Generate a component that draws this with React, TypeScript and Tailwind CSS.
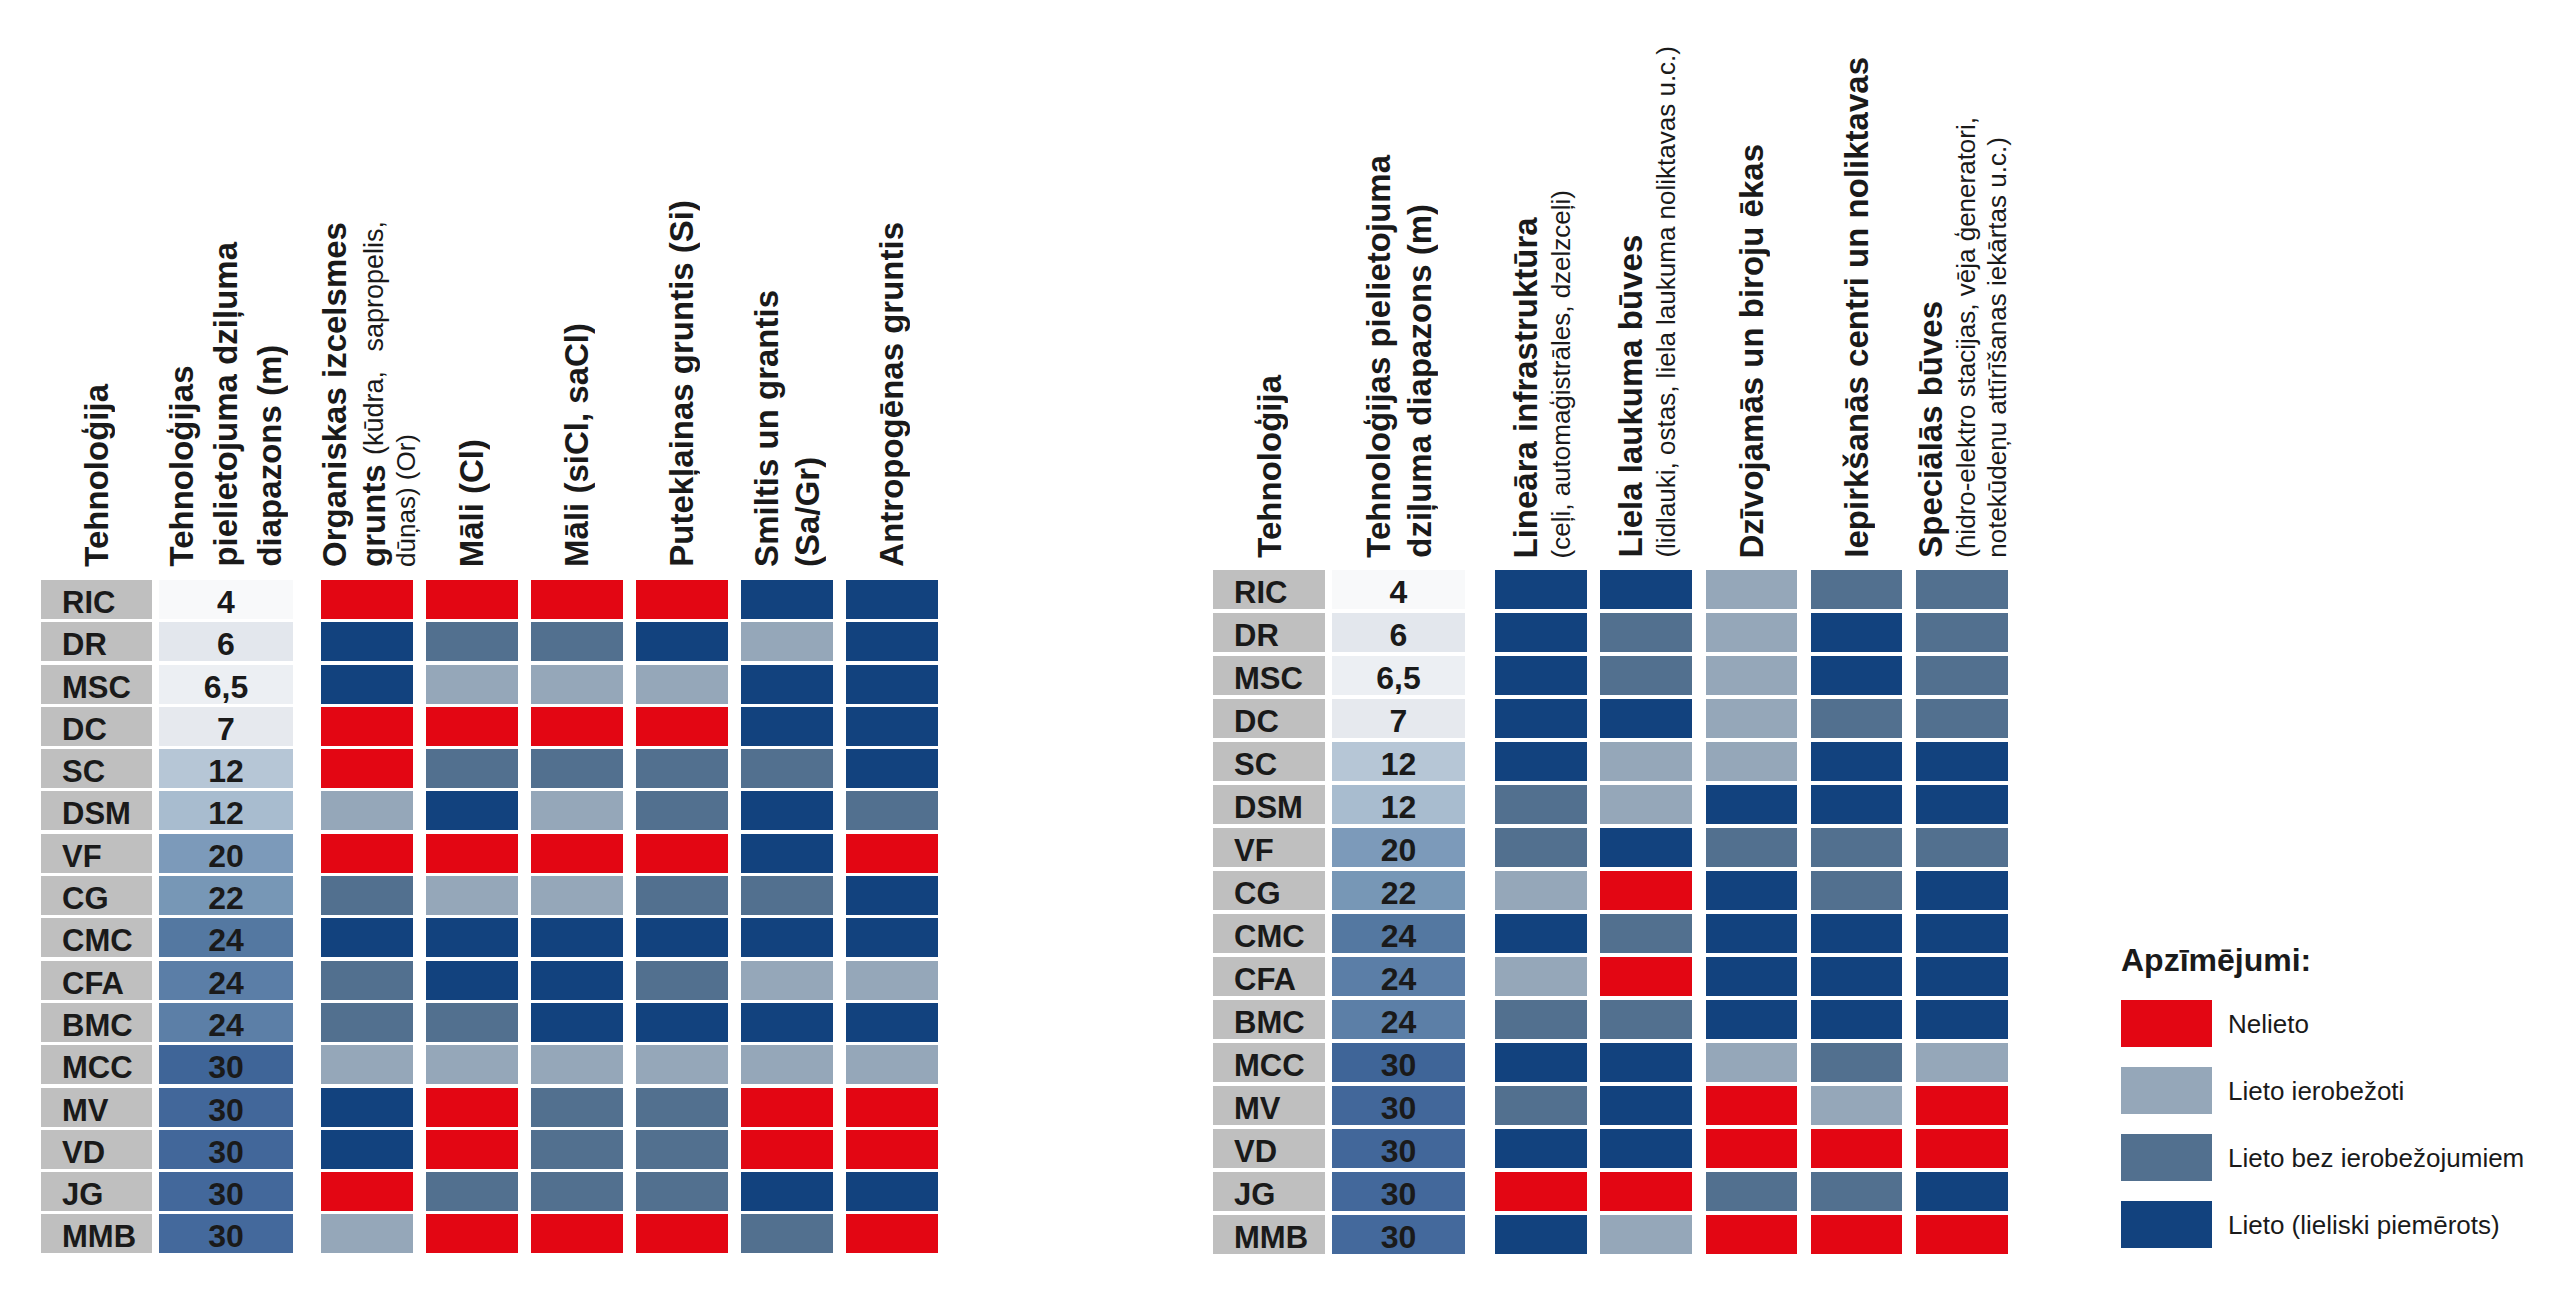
import type { ReactNode } from "react"

const FONT = "font-['Liberation_Sans',Arial,sans-serif]"

const CELL: Record<string, string> = {
  R: "bg-[#e30613]",
  L: "bg-[#95a7b9]",
  M: "bg-[#52708f]",
  D: "bg-[#12427e]",
}

const rows = [
  { t: "RIC", d: "4", bg: "bg-[#f8f9fa]" },
  { t: "DR", d: "6", bg: "bg-[#e3e7ed]" },
  { t: "MSC", d: "6,5", bg: "bg-[#eceff3]" },
  { t: "DC", d: "7", bg: "bg-[#e6e9ee]" },
  { t: "SC", d: "12", bg: "bg-[#b6c6d6]" },
  { t: "DSM", d: "12", bg: "bg-[#a8bccf]" },
  { t: "VF", d: "20", bg: "bg-[#7c9aba]" },
  { t: "CG", d: "22", bg: "bg-[#7797b6]" },
  { t: "CMC", d: "24", bg: "bg-[#5478a1]" },
  { t: "CFA", d: "24", bg: "bg-[#5b7ea7]" },
  { t: "BMC", d: "24", bg: "bg-[#5c7fa7]" },
  { t: "MCC", d: "30", bg: "bg-[#3f6598]" },
  { t: "MV", d: "30", bg: "bg-[#42679a]" },
  { t: "VD", d: "30", bg: "bg-[#42679a]" },
  { t: "JG", d: "30", bg: "bg-[#43689b]" },
  { t: "MMB", d: "30", bg: "bg-[#44699c]" },
]

// soil types (left) and building types (right), one string per technology row
const soil = [
  "RRRRDD", "DMMDLD", "DLLLDD", "RRRRDD", "RMMMMD", "LDLMDM", "RRRRDR", "MLLMMD",
  "DDDDDD", "MDDMLL", "MMDDDD", "LLLLLL", "DRMMRR", "DRMMRR", "RMMMDD", "LRRRMR",
]
const build = [
  "DDLMM", "DMLDM", "DMLDM", "DDLMM", "DLLDD", "MLDDD", "MDMMM", "LRDMD",
  "DMDDD", "LRDDD", "MMDDD", "DDLML", "MDRLR", "DDRRR", "RRMMD", "DLRRR",
]

// rotated header: lines stack left to right, text reads bottom to top
function VHead({ children }: { children: ReactNode }) {
  return (
    <div className="[writing-mode:vertical-rl] rotate-180 whitespace-nowrap text-[#1a1a1a]">
      {children}
    </div>
  )
}

const B = ({ children }: { children: ReactNode }) => (
  <div className="text-[33px] font-bold leading-[41px]">{children}</div>
)
const S = ({ children }: { children: ReactNode }) => (
  <div className="text-[26px] leading-[31px]">{children}</div>
)

type Side = {
  headH: string
  headPb: string
  techW: string
  depthW: string
  dataGap0: string
  dataGap: string
  rowGap: string
  heads: ReactNode[]
  data: string[]
}

function Table({ s }: { s: Side }) {
  const dataMl = (i: number) => (i === 0 ? s.dataGap0 : s.dataGap)
  return (
    <div className="flex flex-col">
      <div className={`flex items-end ${s.headH}`}>
        <div className={`flex justify-center ${s.techW} ${s.headPb}`}>{s.heads[0]}</div>
        <div className={`ml-[7px] flex justify-center ${s.depthW} ${s.headPb}`}>{s.heads[1]}</div>
        {s.heads.slice(2).map((h, i) => (
          <div key={i} className={`flex w-[91.5px] justify-center ${dataMl(i)} ${s.headPb}`}>
            {h}
          </div>
        ))}
      </div>
      <div className={`flex flex-col ${s.rowGap}`}>
        {rows.map((r, ri) => (
          <div key={r.t} className="flex h-[39px]">
            <div className={`${s.techW} h-[39px] bg-[#bfbfbf] pl-[21px] text-[31px] font-bold leading-[45px] text-[#1a1a1a]`}>
              {r.t}
            </div>
            <div className={`ml-[7px] ${s.depthW} h-[39px] ${r.bg} text-center text-[32px] font-bold leading-[44px] text-[#1a1a1a]`}>
              {r.d}
            </div>
            {s.data[ri].split("").map((c, ci) => (
              <div key={ci} className={`h-[39px] w-[91.5px] ${dataMl(ci)} ${CELL[c]}`} />
            ))}
          </div>
        ))}
      </div>
    </div>
  )
}

const left: Side = {
  headH: "h-[580px]",
  headPb: "pb-[13px]",
  techW: "w-[111px]",
  depthW: "w-[134px]",
  dataGap0: "ml-[28px]",
  dataGap: "ml-[13.5px]",
  rowGap: "gap-y-[3.3px]",
  data: soil,
  heads: [
    <VHead><B>Tehnoloģija</B></VHead>,
    <VHead>
      <div className="text-[33px] font-bold leading-[44px]">Tehnoloģijas</div>
      <div className="text-[33px] font-bold leading-[44px]">pielietojuma dziļuma</div>
      <div className="text-[33px] font-bold leading-[44px]">diapazons (m)</div>
    </VHead>,
    <VHead>
      <B>Organiskas izcelsmes</B>
      <div className="text-[33px] font-bold leading-[38px]">
        grunts <span className="text-[27px] font-normal [word-spacing:12px]">(kūdra, sapropelis,</span>
      </div>
      <div className="text-[26px] leading-[26px]">dūņas) (Or)</div>
    </VHead>,
    <VHead><B>Māli (Cl)</B></VHead>,
    <VHead><B>Māli (siCl, saCl)</B></VHead>,
    <VHead><B>Putekļainas gruntis (Si)</B></VHead>,
    <VHead>
      <B>Smiltis un grantis</B>
      <B>(Sa/Gr)</B>
    </VHead>,
    <VHead><B>Antropogēnas gruntis</B></VHead>,
  ],
}

const right: Side = {
  headH: "h-[570px]",
  headPb: "pb-[12px]",
  techW: "w-[112px]",
  depthW: "w-[133px]",
  dataGap0: "ml-[30px]",
  dataGap: "ml-[13.75px]",
  rowGap: "gap-y-[4px]",
  data: build,
  heads: [
    <VHead><B>Tehnoloģija</B></VHead>,
    <VHead>
      <B>Tehnoloģijas pielietojuma</B>
      <B>dziļuma diapazons (m)</B>
    </VHead>,
    <VHead>
      <B>Lineāra infrastruktūra</B>
      <S>(ceļi, automaģistrāles, dzelzceļi)</S>
    </VHead>,
    <VHead>
      <B>Liela laukuma būves</B>
      <S>(lidlauki, ostas, liela laukuma noliktavas u.c.)</S>
    </VHead>,
    <VHead><B>Dzīvojamās un biroju ēkas</B></VHead>,
    <VHead><B>Iepirkšanās centri un noliktavas</B></VHead>,
    <VHead>
      <B>Speciālās būves</B>
      <S>(hidro-elektro stacijas, vēja ģeneratori,</S>
      <S>notekūdeņu attīrīšanas iekārtas u.c.)</S>
    </VHead>,
  ],
}

const legend = [
  { c: "bg-[#e30613]", t: "Nelieto" },
  { c: "bg-[#95a7b9]", t: "Lieto ierobežoti" },
  { c: "bg-[#52708f]", t: "Lieto bez ierobežojumiem" },
  { c: "bg-[#12427e]", t: "Lieto (lieliski piemērots)" },
]

export default function App() {
  return (
    <div className={`flex h-[1290px] w-[2560px] items-start bg-white ${FONT}`}>
      <div className="ml-[41px]">
        <Table s={left} />
      </div>
      <div className="ml-[275.5px]">
        <Table s={right} />
      </div>
      <div className="mb-[42px] ml-[113.5px] flex flex-col self-end text-[#1a1a1a]">
        <div className="text-[32px] font-bold leading-[38px]">Apzīmējumi:</div>
        <div className="mt-[21px] flex flex-col gap-y-[20px]">
          {legend.map((l) => (
            <div key={l.t} className="flex items-center">
              <div className={`h-[47px] w-[91px] ${l.c}`} />
              <div className="ml-[16px] text-[26px] leading-[30px]">{l.t}</div>
            </div>
          ))}
        </div>
      </div>
    </div>
  )
}
